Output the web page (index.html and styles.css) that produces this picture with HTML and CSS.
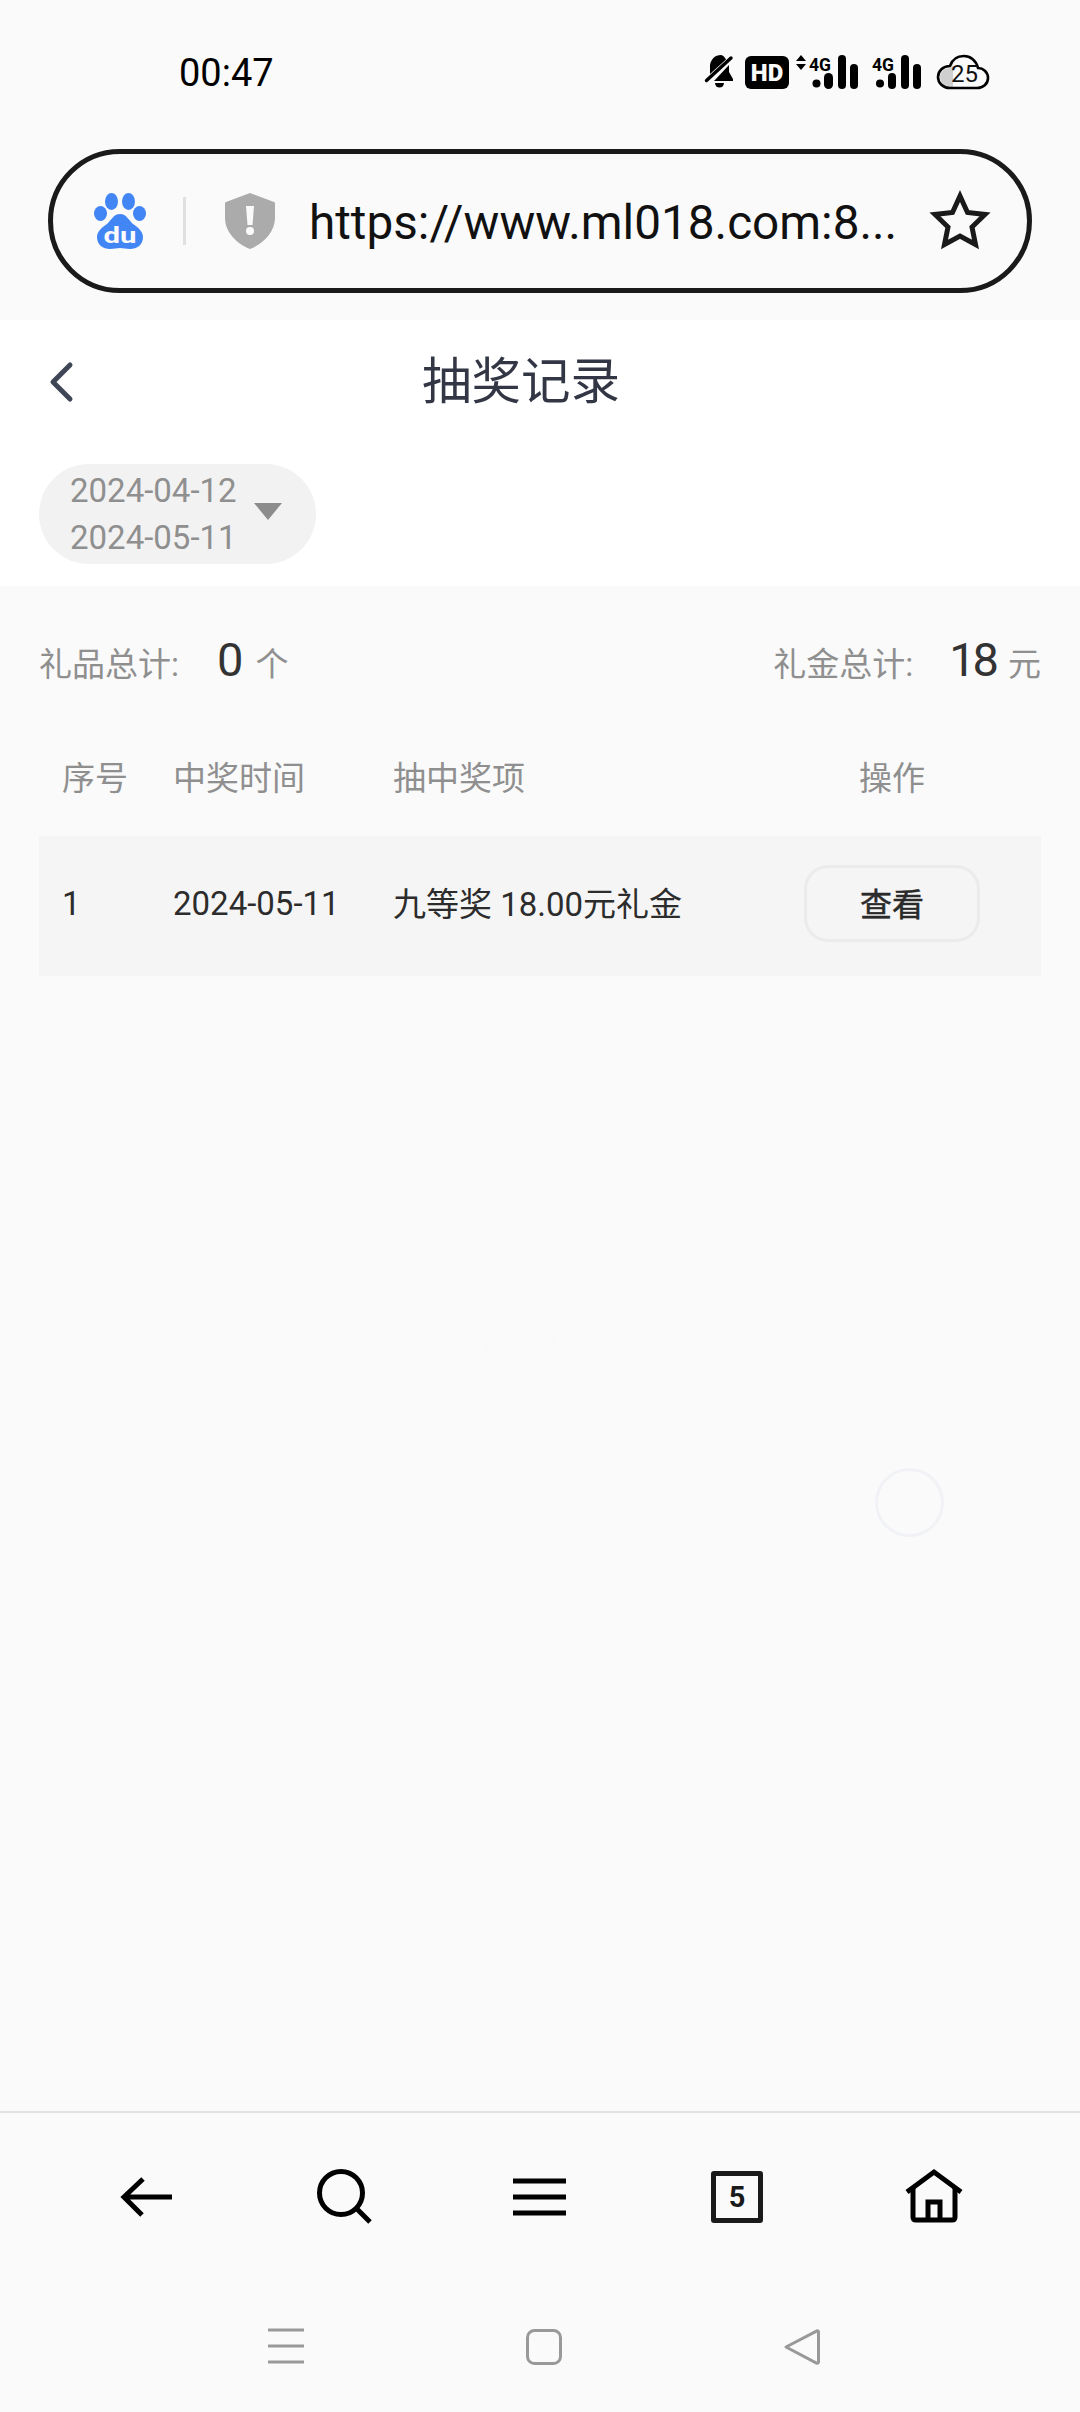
FILE: index.html
```html
<!DOCTYPE html>
<html lang="zh-CN">
<head>
<meta charset="utf-8">
<title>抽奖记录</title>
<link rel="stylesheet" href="styles.css">
</head>
<body>
<div class="screen">
  <div class="chrome">
    <div class="statusbar">
      <span class="clock">00:47</span>
      <div class="status-icons">
        <svg class="ic-bell" width="30" height="34" viewBox="0 0 30 34">
          <path d="M16 0c-6 0-10 4-11 10v9L21 4.500C20 2.500 18 0 16 0z" fill="#000"/>
          <path d="M24 10v7l4 7v2H9z" fill="#000"/>
          <path d="M1.500 25.500 26 3" stroke="#000" stroke-width="3.400" stroke-linecap="round"/>
          <path d="M10 28h9a4.500 4.500 0 0 1-9 0z" fill="#000"/>
        </svg>
        <svg class="ic-hd" width="44" height="33" viewBox="0 0 44 33">
          <rect width="44" height="33" rx="6" fill="#000"/>
          <text x="22" y="25" class="hd-label" text-anchor="middle">HD</text>
        </svg>
        <svg class="ic-sig" width="62" height="34" viewBox="0 0 62 34">
          <path d="M0 6 5 0l5 6zM0 9h10l-5 6z" fill="#000"/>
          <text x="13" y="16" class="net-label" textLength="22" lengthAdjust="spacingAndGlyphs">4G</text>
          <circle cx="20.500" cy="28.500" r="4" fill="#000"/>
          <rect x="28" y="18" width="9" height="16" rx="4.500" fill="#000"/>
          <rect x="42" y="0" width="8" height="34" rx="4" fill="#000"/>
          <rect x="54" y="9" width="8" height="25" rx="4" fill="#000"/>
        </svg>
        <svg class="ic-sig2" width="49" height="34" viewBox="0 0 49 34">
          <text x="0" y="16" class="net-label" textLength="22" lengthAdjust="spacingAndGlyphs">4G</text>
          <circle cx="8" cy="28.500" r="4" fill="#000"/>
          <rect x="16" y="18" width="8" height="16" rx="4" fill="#000"/>
          <rect x="29" y="0" width="8" height="34" rx="4" fill="#000"/>
          <rect x="41" y="9" width="8" height="25" rx="4" fill="#000"/>
        </svg>
        <svg class="ic-cloud" width="52" height="36" viewBox="0 0 52 36">
          <path d="M13 34h27c6 0 11-4 11-10s-5-10-10-10C39 6 33 2 27 2c-7 0-12 4-14 10C6 12 1 17 1 23s5 11 12 11z" fill="#fafafa"/>
          <path d="M16 33H13C7 33 3 28 3 23s4-9 11-9l2-3z" fill="#cfcfcf"/>
          <path d="M13 34h27c6 0 11-4 11-10s-5-10-10-10C39 6 33 2 27 2c-7 0-12 4-14 10C6 12 1 17 1 23s5 11 12 11z" fill="none" stroke="#000" stroke-width="2.600"/>
          <text x="27.500" y="28" class="cloud-label" text-anchor="middle">25</text>
        </svg>
      </div>
    </div>
    <div class="urlbar">
      <svg class="ic-baidu" width="54" height="56" viewBox="0 0 54 56">
        <g fill="#4285f4">
          <ellipse cx="18.500" cy="8.500" rx="6.500" ry="8.500"/>
          <ellipse cx="35.500" cy="8.500" rx="6.500" ry="8.500"/>
          <ellipse cx="7.500" cy="20.500" rx="6.500" ry="7.500"/>
          <ellipse cx="46.500" cy="20.500" rx="6.500" ry="7.500"/>
          <path d="M27 21c6 0 8 5 13 10 6 4 10 8 10 13 0 8-6 12-13 12-4 0-7-1-10-1s-6 1-10 1C10 56 4 52 4 44c0-5 4-9 10-13 5-5 7-10 13-10z"/>
        </g>
        <text x="27" y="50" class="baidu-label" text-anchor="middle" textLength="33" lengthAdjust="spacingAndGlyphs">du</text>
      </svg>
      <span class="url-sep"></span>
      <svg class="ic-shield" width="50" height="56" viewBox="0 0 50 56">
        <path d="M25 0 49 9c1 0 1 1 1 2v14c0 14-12 26-25 31C12 51 0 39 0 25V11c0-1 0-2 1-2z" fill="#ababab"/>
        <path d="M21 13h8l-1.500 19h-5z" fill="#fafafa"/>
        <circle cx="25" cy="38" r="4" fill="#fafafa"/>
      </svg>
      <span class="url-text">https://www.ml018.com:8...</span>
      <svg class="ic-star" width="60" height="58" viewBox="0 0 60 58">
        <path d="M30 5 37.500 21.500 55 23.500 42 36 45.500 53.500 30 45 14.500 53.500 18 36 5 23.500 22.500 21.500z" fill="none" stroke="#1a1a1a" stroke-width="5"/>
      </svg>
    </div>
  </div>

  <div class="page-head">
    <div class="titlebar">
      <svg class="ic-chevron" width="24" height="40" viewBox="0 0 24 40">
        <path d="M21 3 4 20l17 17" fill="none" stroke="#3f4656" stroke-width="5" stroke-linecap="round" stroke-linejoin="round"/>
      </svg>
      <h1 class="title">抽奖记录</h1>
    </div>
    <div class="filter">
      <div class="date-pill">
        <div class="dates">
          <span>2024-04-12</span>
          <span>2024-05-11</span>
        </div>
        <span class="caret"></span>
      </div>
    </div>
  </div>

  <main class="content">
    <div class="totals">
      <div class="total">
        <span class="total-label">礼品总计:</span>
        <span class="total-value value-single">0</span>
        <span class="total-unit">个</span>
      </div>
      <div class="total">
        <span class="total-label">礼金总计:</span>
        <span class="total-value value-tight">18</span>
        <span class="total-unit">元</span>
      </div>
    </div>
    <div class="table-head grid-row">
      <span class="col-no">序号</span>
      <span class="col-time">中奖时间</span>
      <span class="col-prize">抽中奖项</span>
      <span class="col-act">操作</span>
    </div>
    <div class="table-row grid-row">
      <span class="col-no cell-text cell-num">1</span>
      <span class="col-time cell-text cell-num">2024-05-11</span>
      <span class="col-prize cell-text">九等奖 18.00元礼金</span>
      <span class="col-act"><button class="view-btn" type="button">查看</button></span>
    </div>
    <span class="float-ring ring-a"></span>
    <span class="float-ring ring-b"></span>
  </main>

  <nav class="toolbar">
    <svg width="52" height="42" viewBox="0 0 52 42" class="tool-back">
      <path d="M52 21H5M23 3 4 21l18 18" fill="none" stroke="#000" stroke-width="5"/>
    </svg>
    <svg width="56" height="56" viewBox="0 0 56 56" class="tool-search">
      <circle cx="24" cy="24" r="21.500" fill="none" stroke="#000" stroke-width="5"/>
      <path d="M39 39 53 53" stroke="#000" stroke-width="5"/>
    </svg>
    <svg width="54" height="38" viewBox="0 0 54 38" class="tool-menu">
      <path d="M0 3h53M0 19h53M0 35h53" stroke="#000" stroke-width="5"/>
    </svg>
    <div class="tool-tabs">5</div>
    <svg width="58" height="54" viewBox="0 0 58 54" class="tool-home">
      <path d="M2 23 29 3l27 20" fill="none" stroke="#000" stroke-width="5"/>
      <path d="M8 19v29c0 2 1 3 3 3h36c2 0 3-1 3-3V19" fill="none" stroke="#000" stroke-width="5"/>
      <path d="M23 51V33h12v18" fill="none" stroke="#000" stroke-width="5"/>
    </svg>
  </nav>

  <nav class="sysnav">
    <svg width="36" height="36" viewBox="0 0 36 36" class="sys-menu">
      <path d="M0 1h36M0 17h36M0 33h36" stroke="#999" stroke-width="3.200"/>
    </svg>
    <svg width="36" height="36" viewBox="0 0 36 36" class="sys-home">
      <rect x="1.500" y="1.500" width="33" height="33" rx="7" fill="none" stroke="#999" stroke-width="3"/>
    </svg>
    <svg width="36" height="36" viewBox="0 0 36 36" class="sys-back">
      <path d="M2 18 33 1.800c1 0 1.500.5 1.500 1.500v29.500c0 1-.5 1.500-1.500 1.500z" fill="none" stroke="#999" stroke-width="3" stroke-linejoin="round"/>
    </svg>
  </nav>
</div>
</body>
</html>
```

FILE: styles.css
```css
* { box-sizing: border-box; }

html, body { margin: 0; padding: 0; }

body {
  width: 1080px;
  height: 2412px;
  overflow: hidden;
  background: #fafafa;
  font-family: Roboto, "Noto Sans CJK SC", sans-serif;
}

svg { overflow: visible; }

.screen {
  display: flex;
  flex-direction: column;
  height: 2412px;
}

/* Browser chrome */
.chrome {
  height: 320px;
  background: #fafafa;
  flex: none;
}

.statusbar {
  height: 144px;
  padding: 0 91px 0 179px;
  display: flex;
  align-items: center;
  justify-content: space-between;
}

.clock {
  font-size: 38px;
  color: #000;
  margin-top: 2px;
}

.status-icons {
  display: flex;
  align-items: center;
}

.ic-hd { margin-left: 10px; }
.ic-sig { margin-left: 7px; }
.ic-sig2 { margin-left: 14px; }
.ic-cloud { margin-left: 16px; }

.hd-label {
  font: 900 24px Roboto, sans-serif;
  fill: #fafafa;
}

.net-label {
  font: 700 19px Roboto, sans-serif;
  fill: #000;
}

.cloud-label {
  font: 400 24px Roboto, sans-serif;
  fill: #111;
}

.urlbar {
  margin: 5px 48px 0 48px;
  height: 144px;
  border: 5px solid #1a1a1a;
  border-radius: 72px;
  display: flex;
  align-items: center;
  padding-left: 40px;
  background: #fafafa;
}

.baidu-label {
  font: 700 22px Roboto, sans-serif;
  fill: #fafafa;
}

.url-sep {
  width: 3px;
  height: 48px;
  margin-left: 36px;
  background: #e0e0e0;
}

.ic-shield { margin-left: 39px; }

.url-text {
  margin: 3px 0 0 34px;
  font-size: 47.700px;
  color: #111;
  white-space: nowrap;
}

.ic-star { margin: -3px 0 0 33px; }

/* Page heading and date filter */
.page-head {
  height: 266px;
  flex: none;
  background: #fff;
}

.titlebar {
  height: 124px;
  display: flex;
  align-items: center;
  padding-left: 49px;
}

.title {
  margin: 2px 0 0 349px;
  font-size: 49.500px;
  font-weight: 400;
  line-height: 1;
  color: #333644;
}

.filter {
  padding: 20px 0 0 39px;
}

.date-pill {
  width: 277px;
  height: 100px;
  border-radius: 50px;
  background: #f2f2f2;
  display: flex;
  align-items: center;
  padding-left: 31px;
}

.dates {
  display: flex;
  flex-direction: column;
  align-items: center;
  font-size: 33px;
  line-height: 47px;
  color: #8f8f8f;
  margin-top: -1px;
}

.caret {
  width: 0;
  height: 0;
  margin: -5px 0 0 17px;
  border-left: 14px solid transparent;
  border-right: 14px solid transparent;
  border-top: 17px solid #8c8c8c;
}

/* Totals and records */
.content {
  flex: 1;
  position: relative;
  padding: 0 39px;
}

.totals {
  height: 150px;
  padding-bottom: 4px;
  display: flex;
  justify-content: space-between;
  align-items: center;
}

.total {
  display: flex;
  align-items: baseline;
}

.total-label {
  font-size: 33px;
  color: #8f8f8f;
  margin-right: 36px;
}

.total-value {
  font-size: 47px;
  color: #333;
}

.value-single { margin-left: 2px; }
.value-tight { letter-spacing: -3px; }

.total-unit {
  font-size: 33px;
  color: #8f8f8f;
  margin-left: 12px;
}

.grid-row {
  display: grid;
  grid-template-columns: 111px 220px 1fr 176px 61px;
  align-items: center;
  padding-left: 23px;
}

.table-head {
  height: 100px;
  padding-bottom: 20px;
  font-size: 33px;
  color: #8f8f8f;
}

.table-row {
  height: 140px;
  padding-bottom: 5px;
  background: #f5f5f5;
  font-size: 33px;
  color: #2c2c2c;
}

.cell-text { margin-bottom: 3px; }
.cell-num { margin-bottom: 1px; }

.table-head .col-act { text-align: center; }

.view-btn {
  display: block;
  width: 176px;
  height: 77px;
  border: 3px solid #ebebeb;
  border-radius: 24px;
  background: transparent;
  font: 400 32px Roboto, "Noto Sans CJK SC", sans-serif;
  -webkit-text-stroke: 0.5px #2a2a2a;
  color: #2a2a2a;
  padding: 0 0 3px;
}

.float-ring {
  position: absolute;
  width: 69px;
  height: 69px;
  border-radius: 50%;
  filter: blur(0.6px);
}

.ring-a {
  left: 486px;
  top: 727px;
  border: 2px solid #f9f9fa;
}

.ring-b {
  left: 875px;
  top: 882px;
  border: 3px solid #f1f2f5;
}

/* Browser toolbar */
.toolbar {
  height: 155px;
  flex: none;
  border-top: 2px solid #e2e2e2;
  display: flex;
  align-items: center;
  padding: 14px 0 0 120px;
}

.tool-search { margin-left: 145px; }
.tool-menu { margin-left: 140px; margin-top: 1px; }
.tool-tabs {
  width: 52px;
  height: 52px;
  margin-left: 144px;
  border: 5px solid #1a1a1a;
  border-radius: 3px;
  text-align: center;
  font-size: 29px;
  font-weight: 700;
  line-height: 42px;
  color: #1a1a1a;
}
.tool-home { margin-left: 142px; margin-top: -2px; }

/* System navigation */
.sysnav {
  height: 146px;
  flex: none;
  display: flex;
  padding: 63px 0 0 268px;
  align-items: flex-start;
}

.sys-home { margin-left: 222px; }
.sys-back { margin-left: 222px; }
```
